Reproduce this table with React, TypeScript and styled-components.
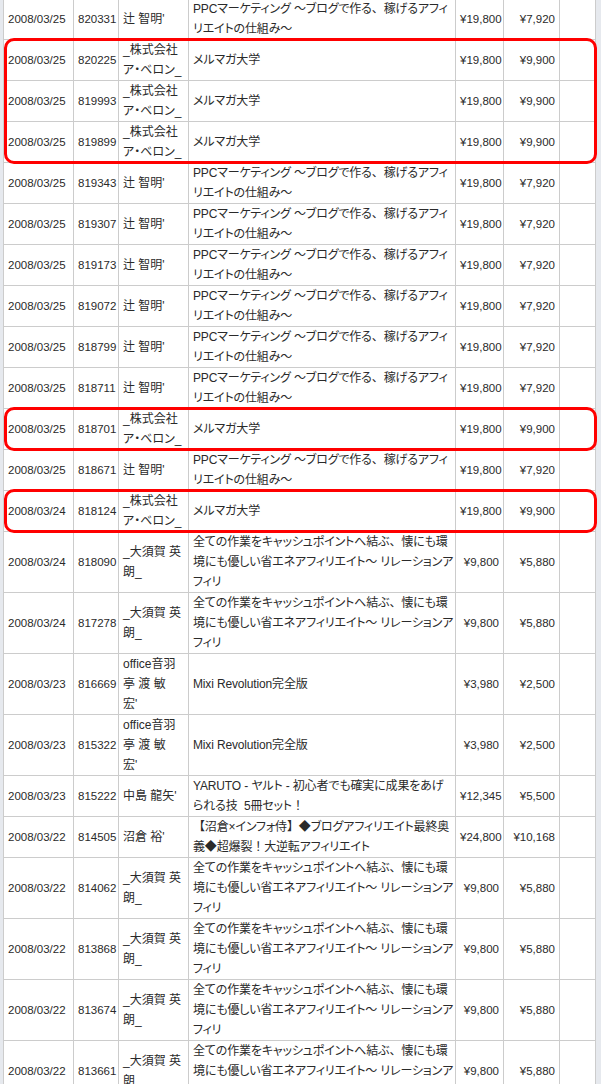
import React from "react";
import styled, { createGlobalStyle } from "styled-components";

const GlobalStyle = createGlobalStyle`
  html, body { margin: 0; padding: 0; background: #ffffff; }
  #root { width: 601px; }
`;

type Row = {
  date: string;
  id: string;
  name: string[];
  title: string[];
  price: string;
  reward: string;
  hl?: boolean;
};

const PPC = ["PPCマーケティング 〜ブログで作る、稼げるアフィ", "リエイトの仕組み〜"];
const TSUJI = ["辻 智明'"];
const ABERON = ["_株式会社", "ア・ベロン_"];
const MELMA = ["メルマガ大学"];
const OSUGA = ["_大須賀 英", "朗_"];
const ECO = [
  "全ての作業をキャッシュポイントへ結ぶ、懐にも環",
  "境にも優しい省エネアフィリエイト〜 リレーションア",
  "フィリ",
];
const OFFICE = ["office音羽", "亭 渡 敏", "宏'"];
const MIXI = ["Mixi Revolution完全版"];

const ppc = (id: string): Row => ({ date: "2008/03/25", id, name: TSUJI, title: PPC, price: "¥19,800", reward: "¥7,920" });
const mel = (date: string, id: string): Row => ({ date, id, name: ABERON, title: MELMA, price: "¥19,800", reward: "¥9,900", hl: true });
const eco = (date: string, id: string): Row => ({ date, id, name: OSUGA, title: ECO, price: "¥9,800", reward: "¥5,880" });
const mixi = (id: string): Row => ({ date: "2008/03/23", id, name: OFFICE, title: MIXI, price: "¥3,980", reward: "¥2,500" });

const rows: Row[] = [
  ppc("820331"),
  mel("2008/03/25", "820225"),
  mel("2008/03/25", "819993"),
  mel("2008/03/25", "819899"),
  ppc("819343"),
  ppc("819307"),
  ppc("819173"),
  ppc("819072"),
  ppc("818799"),
  ppc("818711"),
  mel("2008/03/25", "818701"),
  ppc("818671"),
  mel("2008/03/24", "818124"),
  eco("2008/03/24", "818090"),
  eco("2008/03/24", "817278"),
  mixi("816669"),
  mixi("815322"),
  {
    date: "2008/03/23",
    id: "815222",
    name: ["中島 龍矢'"],
    title: ["YARUTO - ヤルト - 初心者でも確実に成果をあげ", "られる技  5冊セット！"],
    price: "¥12,345",
    reward: "¥5,500",
  },
  {
    date: "2008/03/22",
    id: "814505",
    name: ["沼倉 裕'"],
    title: ["【沼倉×インフォ侍】◆ブログアフィリエイト最終奥", "義◆超爆裂！大逆転アフィリエイト"],
    price: "¥24,800",
    reward: "¥10,168",
  },
  eco("2008/03/22", "814062"),
  eco("2008/03/22", "813868"),
  eco("2008/03/22", "813674"),
  eco("2008/03/22", "813661"),
];

const LINE = 20;
const rowHeight = (r: Row) => Math.max(2, r.name.length, r.title.length) * LINE + 1;

const Page = styled.div`
  display: flex;
  align-items: flex-start;
  min-height: 100vh;
  background: #e6e9ee;
  padding: 0 5px 0 3px;
  overflow: hidden;
`;

const Frame = styled.div`
  position: relative;
  margin-top: -2px;
`;

const Table = styled.table`
  width: 593px;
  table-layout: fixed;
  border-collapse: collapse;
  background: #ffffff;
  font-family: "Liberation Sans", "Noto Sans CJK JP", sans-serif;
  font-size: 12px;
  color: #2a2a2a;
  font-feature-settings: "palt";
`;

const Cell = styled.td<{ $align?: "left" | "right"; $num?: boolean; $tight?: boolean }>`
  border: 1px solid #cccccc;
  padding: 0 4px;
  height: 40px;
  line-height: ${LINE}px;
  vertical-align: middle;
  text-align: ${(p) => p.$align ?? "left"};
  white-space: nowrap;
  overflow: hidden;
  font-size: ${(p) => (p.$num ? "11.5px" : "12px")};
  letter-spacing: ${(p) => (p.$tight ? "-0.15px" : "0")};
`;

const Line = styled.div`
  white-space: pre;
`;

const Punct = styled.span`
  font-feature-settings: normal;
`;

const Highlight = styled.div`
  position: absolute;
  left: 1px;
  width: 593px;
  box-sizing: border-box;
  border: 3px solid #ff0000;
  border-radius: 10px;
  pointer-events: none;
`;

const widths = [70, 45, 70, 267, 48, 56, 36];

const PUNCT = /([、！×【】])/;

function Text({ value }: { value: string }) {
  return (
    <>
      {value.split(PUNCT).map((part, i) =>
        PUNCT.test(part) ? <Punct key={i}>{part}</Punct> : <React.Fragment key={i}>{part}</React.Fragment>
      )}
    </>
  );
}

function Lines({ items }: { items: string[] }) {
  return (
    <>
      {items.map((t, i) => (
        <Line key={i}>
          <Text value={t} />
        </Line>
      ))}
    </>
  );
}

export default function App() {
  const tops: number[] = [];
  let acc = 0;
  rows.forEach((r) => {
    tops.push(acc);
    acc += rowHeight(r);
  });
  const groups: { top: number; bottom: number }[] = [];
  rows.forEach((r, i) => {
    if (!r.hl) return;
    const top = tops[i];
    const bottom = tops[i] + rowHeight(r);
    const last = groups[groups.length - 1];
    if (last && rows[i - 1]?.hl) last.bottom = bottom;
    else groups.push({ top, bottom });
  });

  return (
    <>
      <GlobalStyle />
      <Page>
        <Frame>
          <Table>
            <colgroup>
              {widths.map((w, i) => (
                <col key={i} style={{ width: w }} />
              ))}
            </colgroup>
            <tbody>
              {rows.map((r) => (
                <tr key={r.id}>
                  <Cell $num>{r.date}</Cell>
                  <Cell $num>{r.id}</Cell>
                  <Cell>
                    <Lines items={r.name} />
                  </Cell>
                  <Cell $tight>
                    <Lines items={r.title} />
                  </Cell>
                  <Cell $num $align="right">{r.price}</Cell>
                  <Cell $num $align="right">{r.reward}</Cell>
                  <Cell />
                </tr>
              ))}
            </tbody>
          </Table>
          {groups.map((g, i) => (
            <Highlight key={i} style={{ top: g.top - 1, height: g.bottom - g.top + 3 }} />
          ))}
        </Frame>
      </Page>
    </>
  );
}
